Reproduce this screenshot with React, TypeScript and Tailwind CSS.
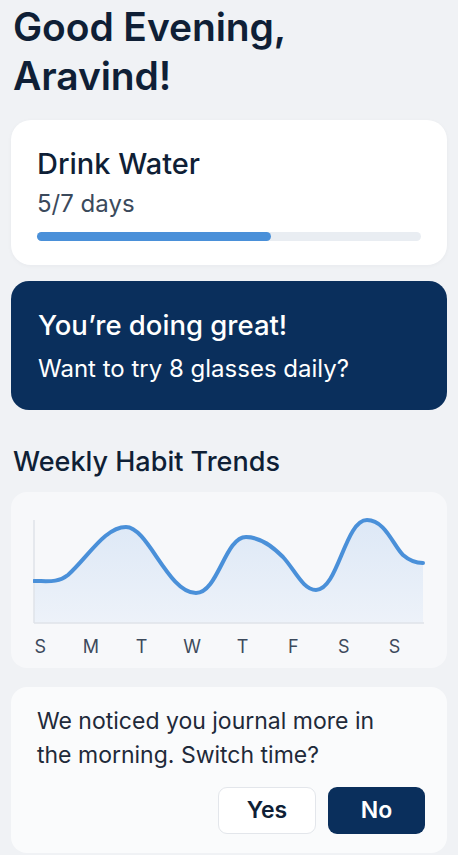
const days = ["S", "M", "T", "W", "T", "F", "S", "S"];

const curve =
  "M1,66 C15,66 25,68 35,60 C55,42 72,12 93,12 C115,12 135,78 163,78 C185,78 192,22 213,22 C228,22 240,32 250,42 C262,55 270,75 283,75 C305,75 312,5 334,5 C352,5 360,30 370,40 C378,47 384,48 390,48";

const TrendChart = () => (
  <svg width="392" height="110" viewBox="0 0 392 110" className="block">
    <defs>
      <linearGradient id="area" x1="0" y1="0" x2="0" y2="1">
        <stop offset="0%" stopColor="#dde8f6" />
        <stop offset="100%" stopColor="#edf2f9" />
      </linearGradient>
    </defs>
    <path d={`${curve} L390,108 L1,108 Z`} fill="url(#area)" />
    <line x1="1" y1="5" x2="1" y2="108" stroke="#dfe3e9" strokeWidth="1.5" />
    <line x1="1" y1="108" x2="391" y2="108" stroke="#dfe3e9" strokeWidth="1.5" />
    <path d={curve} fill="none" stroke="#4a90d9" strokeWidth="4" strokeLinecap="round" />
  </svg>
);

export default function App() {
  return (
    <div
      className="min-h-[855px] bg-[#f0f2f5] px-[11px] pt-[2px] text-[#0f1f36]"
      style={{ fontFamily: "Inter, 'Noto Sans', sans-serif" }}
    >
      <h1 className="ml-[2px] text-[39px] font-semibold leading-[49px] tracking-[-0.1px]">
        Good Evening,
        <br />
        Aravind!
      </h1>

      <div className="mt-[20px] rounded-[20px] bg-white px-[26px] pb-[24px] pt-[26px] shadow-[0_1px_4px_rgba(15,31,54,0.04)]">
        <div className="text-[29px] font-medium leading-[36px]">Drink Water</div>
        <div className="mt-[7px] text-[24px] leading-[30px] text-[#3b4a5c]">5/7 days</div>
        <div className="mt-[13px] h-[9px] w-full rounded-full bg-[#e9edf2]">
          <div className="h-full w-[61%] rounded-full bg-[#4a90d9]" />
        </div>
      </div>

      <div className="mt-[16px] rounded-[18px] bg-[#0a2f5c] px-[27px] pb-[26px] pt-[27px] text-white">
        <div className="text-[27.5px] font-medium leading-[34px]">You’re doing great!</div>
        <div className="mt-[12px] text-[24px] leading-[30px]">Want to try 8 glasses daily?</div>
      </div>

      <h2 className="ml-[2px] mt-[35px] text-[27px] font-medium leading-[34px]">Weekly Habit Trends</h2>

      <div className="mt-[13px] rounded-[16px] bg-[#f7f8fa] pb-[8px] pl-[22px] pr-[22px] pt-[23px]">
        <TrendChart />
        <div className="ml-[-18px] mt-[9px] flex">
          {days.map((d, i) => (
            <span key={i} className="w-[50.6px] text-center text-[18px] leading-[26px] text-[#3d4a5c]">
              {d}
            </span>
          ))}
        </div>
      </div>

      <div className="mt-[19px] rounded-[16px] bg-[#fafbfc] pb-[19px] pl-[26px] pr-[22px] pt-[17px]">
        <p className="text-[23px] leading-[34px] text-[#1f2a3a]">
          We noticed you journal more in
          <br />
          the morning. Switch time?
        </p>
        <div className="mt-[15px] flex justify-end gap-[12px]">
          <button className="h-[47px] w-[98px] rounded-[9px] border border-[#e3e6eb] bg-white text-[23px] font-semibold text-[#0f1f36]">
            Yes
          </button>
          <button className="h-[47px] w-[97px] rounded-[9px] bg-[#0a2f5c] text-[23px] font-semibold text-white">
            No
          </button>
        </div>
      </div>
    </div>
  );
}
